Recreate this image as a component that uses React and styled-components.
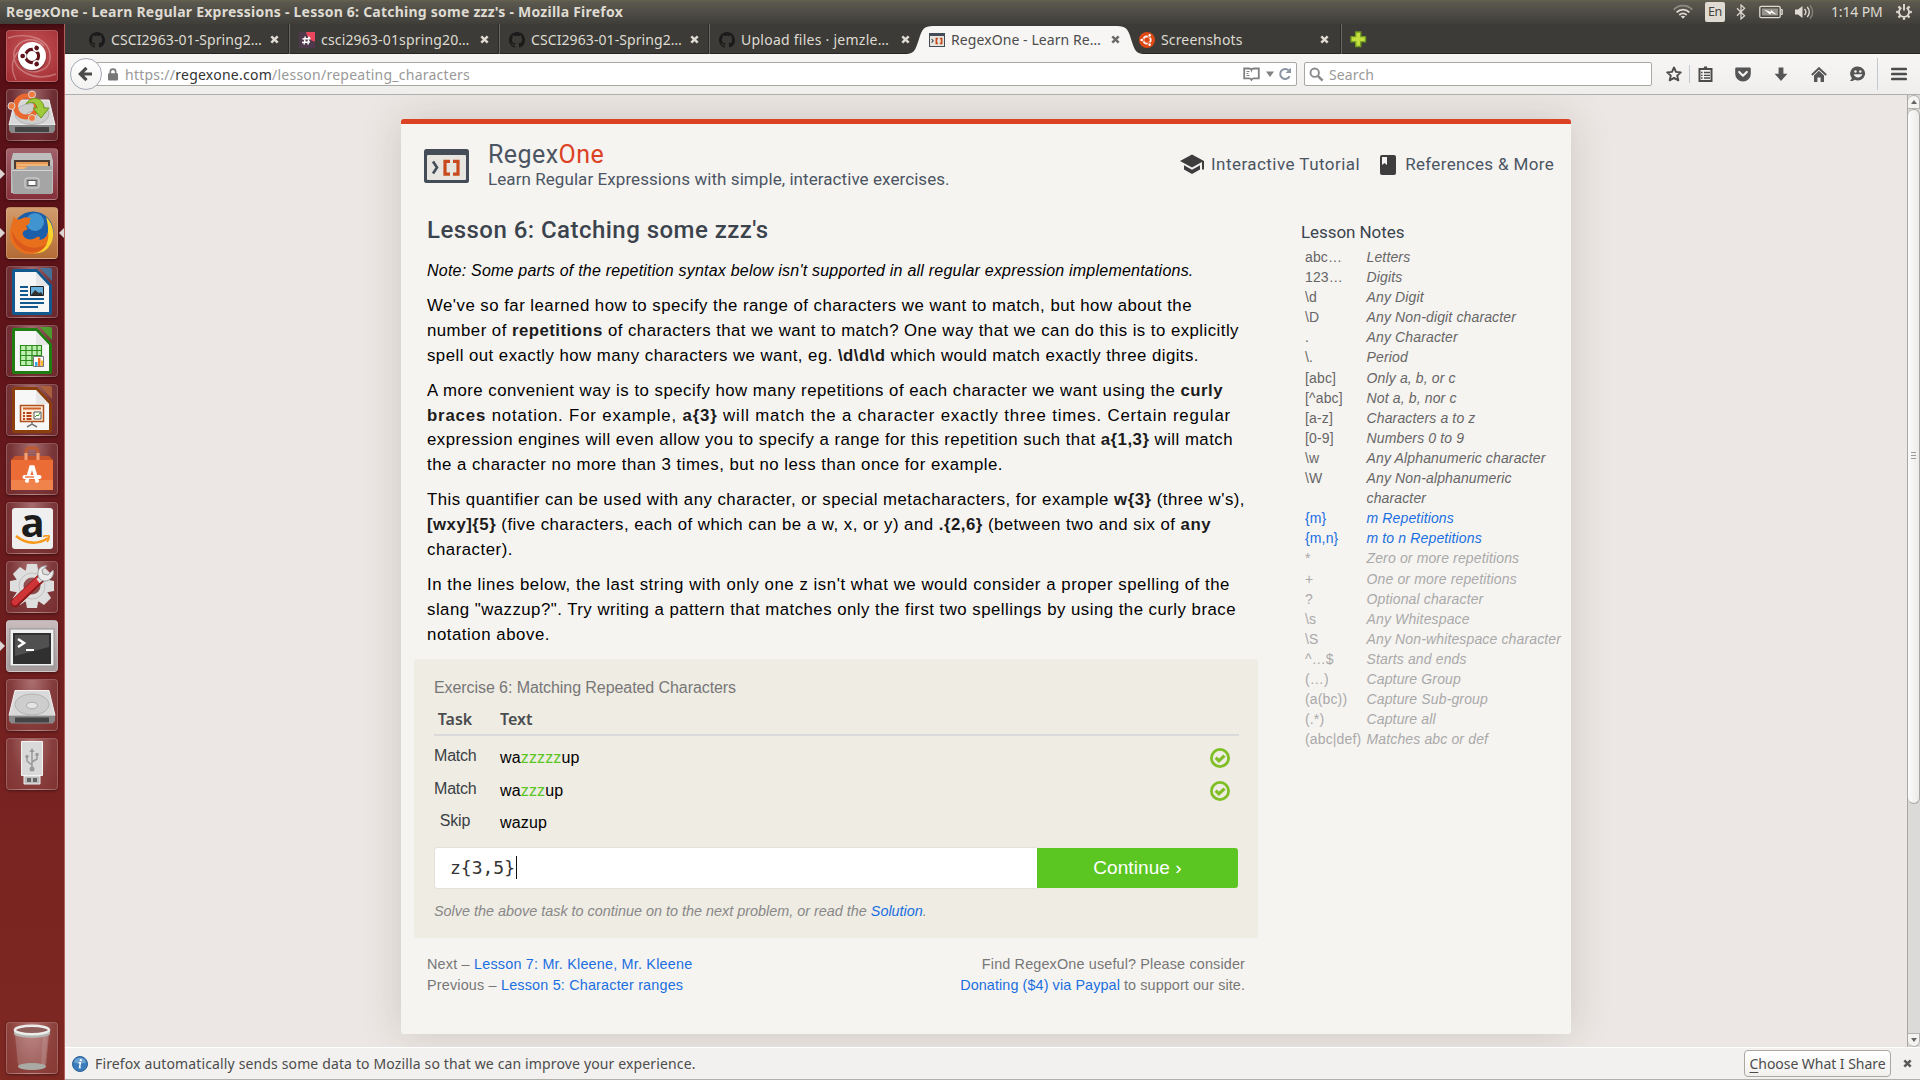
import React, { useLayoutEffect, useRef, useState } from "react";
import styled, { createGlobalStyle, css } from "styled-components";

const UI = '"Noto Sans", "Open Sans", sans-serif';
const HEAD = 'Roboto, "Noto Sans", sans-serif';
const BODY = '"Liberation Sans", Arial, sans-serif';

const GlobalStyle = createGlobalStyle`
  * { box-sizing: border-box; }
  body { margin: 0; background: #ece7e4; overflow: hidden; }
  svg { display: block; flex: none; }
  h1, h2, h3, p { margin: 0; font-weight: inherit; }
`;

/* ---------- shell ---------- */
const Screen = styled.div`
  width: 1920px;
  height: 1080px;
  display: flex;
  flex-direction: column;
  overflow: hidden;
  font-family: ${UI};
  font-size: 14px;
`;
const TopPanel = styled.header`
  height: 24px;
  flex: none;
  display: flex;
  align-items: center;
  justify-content: space-between;
  padding: 0 8px 0 6px;
  color: #dfdbd2;
  background: linear-gradient(#67634f 0, #5b584f 2px, #3f3e39 100%);
`;
const WindowTitle = styled.h1`
  font-size: 14px;
  font-weight: 700;
  line-height: 24px;
  letter-spacing: 0.234px;
  white-space: nowrap;
`;
const Indicators = styled.div`
  display: flex;
  align-items: center;
  height: 24px;
`;
const Gap = styled.span`
  flex: none;
  width: ${(p) => p.$w}px;
`;
const LangBadge = styled.span`
  width: 20px;
  height: 20px;
  border-radius: 2px;
  background: #dfdbd2;
  color: #44423d;
  font-size: 12.5px;
  line-height: 20px;
  text-align: center;
  letter-spacing: -0.3px;
`;
const Clock = styled.span`
  width: 52px;
  white-space: nowrap;
  line-height: 24px;
  letter-spacing: -0.14px;
`;
const Workspace = styled.div`
  flex: 1;
  min-height: 0;
  display: flex;
`;

/* ---------- launcher ---------- */
const Launcher = styled.nav`
  width: 65px;
  flex: none;
  display: flex;
  flex-direction: column;
  gap: 7px;
  padding: 6px 0 6px 6px;
  border-right: 1px solid #b0605c;
  background: linear-gradient(#3f0a10 0, #581016 7px, #5d1319 25%, #7b2522 80%, #7e2822 100%);
`;
const Tile = styled.div`
  position: relative;
  width: 52px;
  height: 52px;
  flex: none;
  border-radius: 4px;
  border: 1px solid rgba(255, 255, 255, 0.2);
  background: ${(p) => p.$bg || "radial-gradient(ellipse at 50% 0, rgba(255,225,225,.42) 0, rgba(255,255,255,.13) 60%, rgba(255,255,255,.08) 100%)"};
  box-shadow: 0 1px 3px rgba(0, 0, 0, 0.4);
  margin-top: ${(p) => (p.$last ? "auto" : 0)};
  & > svg { margin: -1px; }
`;
const Pip = styled.i`
  position: absolute;
  top: 20px;
  border: 5px solid transparent;
  ${(p) => p.$side === "left"
    ? css`left: -7px; border-left-color: #ddd5d3; border-right-width: 0;`
    : css`right: -7px; border-right-color: #ddd5d3; border-left-width: 0;`}
`;

/* ---------- browser chrome ---------- */
const Browser = styled.div`
  flex: 1;
  min-width: 0;
  display: flex;
  flex-direction: column;
`;
const TabBar = styled.div`
  height: 30px;
  flex: none;
  display: flex;
  padding-left: 15px;
  background: #3c3b37;
  border-bottom: 1px solid #282724;
`;
const Tab = styled.div`
  position: relative;
  width: ${(p) => p.$w || 210}px;
  height: 30px;
  flex: none;
  display: flex;
  align-items: center;
  padding: 1px ${(p) => p.$pr ?? 10}px 0 ${(p) => p.$pl ?? 9}px;
  color: ${(p) => (p.$active ? "#4c4c4c" : "#dfdbd2")};
  border-right: ${(p) => (p.$line ? "1px solid #6a6862" : "0")};
  box-shadow: ${(p) => (p.$line ? "inset -1px 0 #2b2a27" : "none")};
  & > svg { position: relative; }
`;
const TabShape = styled.svg`
  && { position: absolute; left: -13px; top: 2px; }
`;
const TabLabel = styled.span`
  position: relative;
  flex: 1;
  margin-left: 6px;
  line-height: 28px;
  white-space: nowrap;
  letter-spacing: ${(p) => p.$ls}px;
`;
const NavBar = styled.div`
  height: 41px;
  flex: none;
  display: flex;
  align-items: center;
  padding: 0 13px 0 5px;
  background: linear-gradient(#f7f6f5, #efeeec);
  border-bottom: 1px solid #b1afab;
`;
const BackButton = styled.div`
  position: relative;
  z-index: 1;
  width: 32px;
  height: 32px;
  flex: none;
  display: grid;
  place-items: center;
  border: 1px solid #a3a9b5;
  border-radius: 50%;
  background: linear-gradient(#fff, #f3f2f1);
`;
const UrlBox = styled.div`
  height: 24px;
  width: 1204px;
  margin-left: -9px;
  display: flex;
  align-items: center;
  padding: 0 4px 0 14px;
  color: #999;
  background: #fff;
  border: 1px solid #aaa8a3;
  border-radius: 0 2px 2px 0;
`;
const Url = styled.span`
  flex: 1;
  margin-left: ${(p) => p.$ml}px;
  padding-top: 1px;
  letter-spacing: ${(p) => p.$ls}px;
  line-height: 22px;
  b { font-weight: 400; color: #333; }
`;
const SearchBox = styled(UrlBox)`
  width: 348px;
  margin-left: 7px;
  padding: 0 4px;
  border-radius: 2px;
`;
const Tools = styled.div`
  display: flex;
  align-items: center;
  margin-left: auto;
`;
const Rule = styled.i`
  width: 1px;
  height: ${(p) => p.$h}px;
  background: #c3c9d0;
`;

/* ---------- page ---------- */
const Viewport = styled.div`
  flex: 1;
  min-height: 0;
  display: flex;
  background: #ece7e4;
`;
const PageArea = styled.main`
  flex: 1;
  padding: 24px 0 0 336px;
  overflow: hidden;
  font-family: ${BODY};
`;
const ScrollBar = styled.div`
  width: 13px;
  flex: none;
  display: flex;
  flex-direction: column;
  background: #dbdad8;
  border-left: 1px solid #aaa8a4;
`;
const ScrollArrow = styled.div`
  height: 14px;
  display: grid;
  place-items: center;
  background: #f4f3f2;
  border: 1px solid #b5b3af;
  border-left: 0;
  border-radius: ${(p) => (p.$down ? "0 0 7px 7px" : "7px 7px 0 0")};
  margin-top: ${(p) => (p.$down ? "auto" : "0")};
`;
const Thumb = styled.div`
  height: 695px;
  display: grid;
  place-content: center;
  gap: 2px;
  padding-bottom: 3px;
  background: linear-gradient(90deg, #fbfbfb, #ecebea);
  border: 1px solid #a9a7a3;
  border-left: 0;
  border-radius: 6px;
  i { width: 5px; height: 1px; background: #999; }
`;
const Card = styled.article`
  width: 1170px;
  height: 915px;
  border-top: 5px solid #db4324;
  border-radius: 3px;
  background: #f6f4f1;
  box-shadow: 0 0 40px rgba(60, 45, 35, 0.17);
`;
const CardHeader = styled.header`
  height: 91px;
  display: flex;
  padding: 15px 17px 0 23px;
`;
const LogoMark = styled.svg`
  margin-top: 10px;
`;
const Brand = styled.div`
  margin-left: 19px;
  flex: 1;
  font-family: ${HEAD};
  color: #4b5563;
`;
const BrandName = styled.h2`
  font-size: 25px;
  line-height: 32px;
  letter-spacing: 0.45px;
  em { font-style: normal; color: #db4324; }
`;
const Tagline = styled.p`
  font-size: 17px;
  line-height: 16px;
  letter-spacing: 0.07px;
`;
const HeaderLink = styled.a`
  display: flex;
  align-items: flex-start;
  margin: 13px 0 0 ${(p) => p.$ml || 0}px;
  font: 17px/24px ${HEAD};
  letter-spacing: ${(p) => p.$ls}px;
  color: #4b5563;
  white-space: nowrap;
  svg { margin: ${(p) => p.$drop}px ${(p) => p.$gap}px 0 0; }
`;
const Columns = styled.div`
  display: flex;
  padding-left: 13px;
`;
const Main = styled.section`
  width: 844px;
`;
const LessonTitle = styled.h2`
  padding-left: 13px;
  margin-bottom: 13px;
  font: 500 24px/30px ${HEAD};
  letter-spacing: 0.46px;
  color: #3b434d;
`;
const Note = styled.p`
  padding-left: 13px;
  margin-bottom: 11px;
  font-size: 16px;
  line-height: 25px;
  font-style: italic;
  letter-spacing: 0.222px;
  white-space: nowrap;
`;
const Para = styled.p`
  padding-left: 13px;
  margin-bottom: 10.4px;
  font-size: 16.8px;
  line-height: 24.8px;
  b { color: #1c1c1c; }
`;
const LineBox = styled.span`
  display: block;
  width: max-content;
  white-space: nowrap;
`;
const Panel = styled.section`
  height: 279px;
  margin-top: 11.4px;
  padding: 17px 19px 0 20px;
  border-radius: 3px;
  background: #efece4;
`;
const PanelTitle = styled.h3`
  font-size: 16px;
  line-height: 24px;
  letter-spacing: -0.076px;
  color: #777;
`;
const taskGrid = css`
  display: grid;
  grid-template-columns: 42px 1fr 20px;
  column-gap: 24px;
  padding-right: 9px;
`;
const TaskHead = styled.div`
  ${taskGrid}
  height: 36px;
  padding-top: 7px;
  border-bottom: 2px solid #dadada;
  font: 600 16px/24px ${UI};
  color: #4a4c4f;
  margin-bottom: 3px;
  span:first-child { text-align: center; }
`;
const TaskRow = styled.div`
  ${taskGrid}
  height: 32.7px;
  font-size: 16px;
  line-height: 33px;
  svg { margin-top: 9px; }
`;
const TaskKind = styled.span`
  text-align: center;
  letter-spacing: -0.2px;
  color: #3a3f44;
`;
const TaskText = styled.span`
  padding-top: 2px;
  letter-spacing: 0.15px;
  color: #000;
  em { font-style: normal; color: #5bc622; }
`;
const AnswerForm = styled.div`
  display: flex;
  height: 42px;
  margin: 10px 1px 12px 0;
`;
const Answer = styled.div`
  flex: 1;
  display: flex;
  align-items: center;
  padding: 0 0 1px 15px;
  background: #fff;
  border: 1px solid #e3e1d8;
  border-right: 0;
  border-radius: 3px 0 0 3px;
  color: #333;
  font: 18px "DejaVu Sans Mono", monospace;
`;
const Caret = styled.i`
  width: 1px;
  height: 23px;
  margin-left: 1px;
  background: #111;
`;
const ContinueButton = styled.div`
  width: 201px;
  height: 40px;
  margin-top: 1px;
  border-radius: 0 3px 3px 0;
  background: #5bc622;
  color: #fff;
  font-size: 19px;
  line-height: 39px;
  letter-spacing: 0.08px;
  text-align: center;
`;
const Hint = styled.p`
  font-size: 14.4px;
  line-height: 20px;
  font-style: italic;
  color: #888;
`;
const Link = styled.a`
  color: #1a6fe0;
`;
const Footer = styled.footer`
  display: flex;
  justify-content: space-between;
  padding: 16px 13px 0;
  font-size: 14.4px;
  line-height: 21px;
  color: #777;
`;
const FooterCol = styled.div`
  text-align: ${(p) => p.$align || "left"};
`;
const FooterLine = styled.div`
  letter-spacing: ${(p) => p.$ls}px;
`;
const Notes = styled.aside`
  margin-left: 43px;
  padding-top: 6px;
  color: #666;
`;
const NotesTitle = styled.h3`
  margin-bottom: 4px;
  font: 17px/22px ${HEAD};
  letter-spacing: -0.07px;
  color: #3b434d;
`;
const NoteRow = styled.div`
  display: grid;
  grid-template-columns: 61.5px auto;
  padding-left: 4px;
  font-size: 14px;
  line-height: 20.1px;
  letter-spacing: 0.14px;
  color: ${(p) => ({ on: "#1a6fe0", off: "#a9a9a9" }[p.$state] || "#666")};
  i { white-space: pre; }
`;
const InfoBar = styled.footer`
  height: 33px;
  flex: none;
  display: flex;
  align-items: center;
  padding: 0 8px 0 7px;
  color: #4c4c4c;
  background: #f2f1ef;
  border-top: 1px solid #fff;
  border-bottom: 1px solid #b1afab;
`;
const InfoText = styled.span`
  flex: 1;
  margin-left: 7px;
  letter-spacing: 0.14px;
`;
const ShareButton = styled.div`
  width: 147px;
  height: 27px;
  margin-right: 12px;
  border: 1px solid #aba8a3;
  border-radius: 4px;
  background: linear-gradient(#fff, #f1f0ee);
  line-height: 26px;
  text-align: center;
  letter-spacing: -0.046px;
  u { text-underline-offset: 3px; }
`;

/* ---------- icons ---------- */
const Close = ({ c = "#dfdbd2", ...p }) => (
  <svg width="9" height="9" viewBox="0 0 9 9" {...p}>
    <path d="M1.3 1.3 7.7 7.7M7.7 1.3 1.3 7.7" stroke={c} strokeWidth="2.5" />
  </svg>
);
const GitHub = () => (
  <svg width="16" height="16" viewBox="0 0 16 16">
    <path fill="#1b1b1b" d="M8 0C3.58 0 0 3.58 0 8c0 3.54 2.29 6.53 5.47 7.59.4.07.55-.17.55-.38 0-.19-.01-.82-.01-1.49-2.01.37-2.53-.49-2.69-.94-.09-.23-.48-.94-.82-1.13-.28-.15-.68-.52-.01-.53.63-.01 1.08.58 1.23.82.72 1.21 1.87.87 2.33.66.07-.52.28-.87.51-1.07-1.78-.2-3.64-.89-3.64-3.95 0-.87.31-1.59.82-2.15-.08-.2-.36-1.02.08-2.12 0 0 .67-.21 2.2.82.64-.18 1.32-.27 2-.27s1.36.09 2 .27c1.53-1.04 2.2-.82 2.2-.82.44 1.1.16 1.92.08 2.12.51.56.82 1.27.82 2.15 0 3.07-1.87 3.75-3.65 3.95.29.25.54.73.54 1.48 0 1.07-.01 1.93-.01 2.2 0 .21.15.46.55.38A8.01 8.01 0 0 0 16 8c0-4.42-3.58-8-8-8z" />
  </svg>
);
const Slack = () => (
  <svg width="16" height="16" viewBox="0 0 16 16">
    <path fill="#4d394b" d="M0 0h16v16H0z" />
    <path fill="#e9455c" d="M7 0h9v9.5C11 9 8 5 7 0z" />
    <path d="m6.2 4.5-1 8M10 4.5l-1 8M3.5 7l8-.6M3 10.5l8-.6" stroke="#fff" strokeWidth="1.5" />
  </svg>
);
const RegexMark = () => (
  <svg width="16" height="14" viewBox="0 0 16 14">
    <path fill="#434c57" d="M0 0h16v14H0z" />
    <path fill="#e6e5df" d="M1 3h14v10H1z" />
    <path d="m2.6 6 1.6 1.8-1.6 1.8" fill="none" stroke="#434c57" strokeWidth="1.1" />
    <path d="M9 5.5H7.4v5H9M10.8 5.5h1.8v5h-1.8" fill="none" stroke="#c8491d" strokeWidth="1.7" />
  </svg>
);
const Friends = ({ ring, hole }) => (
  <g>
    <circle r="5.6" fill="none" stroke={ring} strokeWidth="2.6" />
    {[180, 300, 60].map((a) => (
      <g key={a} transform={`rotate(${a})`}>
        <circle cx="7.6" r="3.1" fill={hole} />
        <circle cx="7.9" r="2" fill={ring} />
      </g>
    ))}
  </g>
);
const UbuntuFav = () => (
  <svg width="16" height="16" viewBox="-12 -12 24 24">
    <circle r="12" fill="#dd4814" />
    <Friends ring="#fff" hole="#dd4814" />
  </svg>
);
const Wifi = () => (
  <svg width="20" height="16" viewBox="0 0 20 16" fill="none" strokeWidth="1.8">
    <path d="M.8 5.6c5-5.4 13.4-5.4 18.4 0" stroke="#8f8c85" />
    <path d="M3.6 8.4c3.6-3.7 9.2-3.7 12.8 0M6.3 11c2.2-2 5.2-2 7.4 0" stroke="#dfdbd2" />
    <path d="m7.8 12.6 2.2 2.2 2.2-2.2c-1.3-1-3.1-1-4.4 0z" fill="#dfdbd2" />
  </svg>
);
const Bluetooth = () => (
  <svg width="10" height="16" viewBox="0 0 10 16">
    <path d="m1 4.3 7.6 7.4L5 15V1l3.6 3.3L1 11.7" fill="none" stroke="#dfdbd2" strokeWidth="1.2" />
  </svg>
);
const Battery = () => (
  <svg width="24" height="14" viewBox="0 0 24 14">
    <rect x=".8" y="1.3" width="20.4" height="11.4" rx="1.5" fill="none" stroke="#dfdbd2" strokeWidth="1.3" />
    <path d="M22 4.5h1.3v5H22z" fill="none" stroke="#dfdbd2" />
    <path d="M3 3.5h16v7H3z" fill="#96938c" />
    <path d="m5 4.3 6.5 2.6.6-2L18 10l-6-2.2-.8 2z" fill="#fff" />
  </svg>
);
const Sound = () => (
  <svg width="20" height="16" viewBox="0 0 20 16">
    <path d="M1 5.5h3L8.5 2v12L4 10.5H1z" fill="#dfdbd2" />
    <path d="M10.5 5c1.6 1.7 1.6 4.3 0 6M13.2 3c2.8 2.9 2.8 7.1 0 10" fill="none" stroke="#dfdbd2" strokeWidth="1.4" />
    <path d="M15.8 1.2c3.8 4 3.8 9.6 0 13.6" fill="none" stroke="#85827b" strokeWidth="1.4" />
  </svg>
);
const Gear = () => (
  <svg width="16" height="17" viewBox="-8 -8 16 17">
    <g stroke="#dfdbd2" fill="none">
      <path d="M-2.6-4.3a5 5 0 1 0 5.2 0" strokeWidth="1.8" />
      <path d="M0-8v6.5" strokeWidth="1.9" />
      {[45, 90, 135, 180, 225, 270, 315].map((a) => (
        <path key={a} d="M0-5.4v-2.4" strokeWidth="2.3" transform={`rotate(${a})`} />
      ))}
    </g>
  </svg>
);
const Arrow = () => (
  <svg width="16" height="16" viewBox="0 0 16 16">
    <path d="M8.5 1.8 2.3 8l6.2 6.2M3 8h11" fill="none" stroke="#4a4a4a" strokeWidth="3.2" />
  </svg>
);
const Lock = () => (
  <svg width="10" height="13" viewBox="0 0 10 13">
    <path d="M2.3 6V3.8a2.7 2.7 0 0 1 5.4 0V6" fill="none" stroke="#777" strokeWidth="1.6" />
    <rect y="5.2" width="10" height="7.4" rx="1" fill="#777" />
  </svg>
);
const Reader = () => (
  <svg width="17" height="14" viewBox="0 0 17 14" fill="none" stroke="#808080">
    <path d="M1.2 1.5H6c1.2 0 2.3.5 2.5 1.3.3-.8 1.4-1.3 2.5-1.3h4.8v9.8H11c-1.2 0-2 .3-2.5 1.4-.4-1.1-1.3-1.4-2.5-1.4H1.2z" strokeWidth="1.8" />
    <path d="M3.5 4.5h3M3.5 6.5h2M3.5 8.5h3" />
  </svg>
);
const Down = ({ c = "#808080" }) => (
  <svg width="8" height="6" viewBox="0 0 8 6"><path d="M0 .5h8L4 6z" fill={c} /></svg>
);
const Reload = () => (
  <svg width="14" height="14" viewBox="0 0 14 14">
    <path d="M11.6 9.3A5 5 0 1 1 10.6 3.3" fill="none" stroke="#8a94a3" strokeWidth="2" />
    <path d="M13 .8V6H7.6z" fill="#8a94a3" />
  </svg>
);
const Magnifier = () => (
  <svg width="15" height="15" viewBox="0 0 15 15" fill="none" stroke="#8a8a8a">
    <circle cx="5.7" cy="5.7" r="4.2" strokeWidth="1.9" />
    <path d="m8.8 8.8 4.8 4.8" strokeWidth="2.6" />
  </svg>
);
const Star = () => (
  <svg width="16" height="16" viewBox="0 0 16 16">
    <path d="m8 1.5 2 4.4 4.8.5-3.6 3.2 1.1 4.7L8 11.9l-4.3 2.4 1.1-4.7L1.2 6.4 6 5.9z" fill="none" stroke="#4c4c4c" strokeWidth="1.9" strokeLinejoin="round" />
  </svg>
);
const Clipboard = () => (
  <svg width="15" height="16" viewBox="0 0 15 16">
    <path d="M1.5 3h12v12h-12z" fill="none" stroke="#4c4c4c" strokeWidth="2" />
    <path d="M4 3.8h7V2.4H9.3L9 .5H6l-.3 1.9H4z" fill="#4c4c4c" />
    <path d="M3 6.5h1.6M6 6.5h6M3 9.3h1.6M6 9.3h6M3 12h1.6M6 12h6" stroke="#4c4c4c" strokeWidth="1.3" />
  </svg>
);
const Pocket = () => (
  <svg width="16" height="15" viewBox="0 0 16 15">
    <path d="M1.5.5h13c.8 0 1.3.6 1.3 1.3v4.9a7.8 7.8 0 0 1-15.6 0V1.8C.2 1 .8.5 1.5.5z" fill="#555" />
    <path d="M4.2 5 8 8.7 11.8 5" fill="none" stroke="#f5f4f3" strokeWidth="2.2" strokeLinecap="round" strokeLinejoin="round" />
  </svg>
);
const Download = () => (
  <svg width="14" height="15" viewBox="0 0 14 15"><path d="M4.6.5h4.8v6.2h4L7 14 .6 6.7h4z" fill="#555" /></svg>
);
const Home = () => (
  <svg width="16" height="15" viewBox="0 0 16 15">
    <path d="M.8 8 8 1.2 15.2 8" fill="none" stroke="#555" strokeWidth="1.9" />
    <path d="M3 8.4 8 3.7l5 4.7V15H9.6v-4.5H6.4V15H3z" fill="#555" />
  </svg>
);
const Chat = () => (
  <svg width="17" height="16" viewBox="0 0 17 16">
    <path d="M9 .6a7.3 6.9 0 1 1-3.2 13.2C4.5 14.9 2.8 15.3.8 15c1.3-.9 1.9-2 1.9-3.3A7.3 6.9 0 0 1 9 .6z" fill="#555" />
    <circle cx="6.5" cy="5.5" r="1.2" fill="#f3f2f1" /><circle cx="11.3" cy="5.5" r="1.2" fill="#f3f2f1" />
    <path d="M4.8 8.3h8.4c-.8 4.2-7.6 4.2-8.4 0z" fill="#f3f2f1" />
  </svg>
);
const Menu = () => (
  <svg width="16" height="14" viewBox="0 0 16 14"><path d="M1.3 2h13.4M1.3 7h13.4M1.3 12h13.4" stroke="#4c4c4c" strokeWidth="2.7" strokeLinecap="round" /></svg>
);
const Plus = () => (
  <svg width="17" height="17" viewBox="0 0 17 17">
    <path d="M5.7 1h5.1v4.7h4.7v5.1h-4.7v4.7H5.7v-4.7H1V5.7h4.7z" fill="#c3df3d" stroke="#6f9a1f" strokeWidth="1.3" />
  </svg>
);
const Cap = () => (
  <svg width="24" height="23" viewBox="0 0 24 23">
    <path fill="#3d3d3d" d="M4 12.2v4.2L12 21l8-4.6v-4.2l-8 4.6zM12 1.5 0 8l12 6.6L22 9.1v7.4h2V8z" />
  </svg>
);
const Book = () => (
  <svg width="16" height="20" viewBox="0 0 16 20">
    <rect width="16" height="20" rx="2" fill="#3d3d3d" />
    <path d="M2 2h5v8L4.5 8 2 10z" fill="#f6f4f1" />
  </svg>
);
const Check = () => (
  <svg width="20" height="20" viewBox="0 0 20 20" fill="none" stroke="#7fbf25">
    <circle cx="10" cy="10" r="8.6" strokeWidth="2.8" />
    <path d="m5.7 9.7 3.2 3.2 5.6-5.2" strokeWidth="3.2" />
  </svg>
);
const Info = () => (
  <svg width="16" height="16" viewBox="0 0 16 16">
    <circle cx="8" cy="8" r="7.5" fill="#3c7cbb" stroke="#2b6197" />
    <path d="M2 6.5a6.2 6.2 0 0 1 12 0C10 8 6 8 2 6.5z" fill="#6fa3d4" />
    <path d="M6.6 6.8h1.8l-.9 4.7h1.3" fill="none" stroke="#fff" strokeWidth="1.4" /><circle cx="8.8" cy="4.2" r="1.1" fill="#fff" />
  </svg>
);

const Art = ({ children }) => <svg width="52" height="52" viewBox="0 0 52 52">{children}</svg>;
const Dash = () => (
  <Art>
    <g fill="none" stroke="#fff" strokeWidth="1.4" opacity=".3">
      <path d="M2 8C22 2 46 8 44 30M50 44C30 52 6 42 8 22M44 30c-2 12-20 16-28 6M8 22C12 8 30 6 38 16M10 50C4 38 6 30 12 22" />
    </g>
    <circle cx="26" cy="27" r="14.5" fill="#3d0a10" opacity=".35" />
    <circle cx="26" cy="26" r="14" fill="#fff" />
    <g transform="translate(26 26) scale(1.18)"><Friends ring="#5d1319" hole="#fff" /></g>
  </Art>
);
const DiskBase = ({ y = 0 }) => (
  <g transform={`translate(0 ${y})`}>
    <path d="M9 11h34l6 25H3z" fill="#d9d9d9" stroke="#f3f3f3" />
    <path d="M3 36h46v5l-2 3H5l-2-3z" fill="#888" /><path d="M9 38h34v5H9z" fill="#444" />
    <ellipse cx="26" cy="25" rx="17" ry="10.5" fill="#cdcdcd" stroke="#b3b3b3" />
    <ellipse cx="26" cy="26" rx="5.5" ry="3.3" fill="#e4e4e4" stroke="#aaa" />
  </g>
);
const Installer = () => (
  <Art>
    <DiskBase />
    <circle cx="20" cy="17.5" r="10.5" fill="none" stroke="#e8682f" strokeWidth="5" />
    <g fill="#f07a3d" stroke="#d9d9d9"><circle cx="5.5" cy="17" r="3.5" /><circle cx="26" cy="5.5" r="3.5" /><circle cx="26" cy="29" r="3.5" /></g>
    <path d="M20 15c4-8 17-8 18 4h5l-8 10-8-10h4c-1-6-6-7-11-4z" fill="#9fcb3a" stroke="#6a971c" />
  </Art>
);
const Files = () => (
  <Art>
    <path d="M7 5h38l2 8v32H5V13z" fill="#bdbdbd" /><path d="M8 12h36v12H8z" fill="#4c3a34" />
    <path d="M10 14h32v9H10z" fill="#e79a55" /><path d="M11 17h31M11 20h31" stroke="#f8cf9e" />
    <path d="M6 21h12l4-3h24v28H7z" fill="#a5a5a5" /><path d="M6 22h40v1H6z" fill="#d5d5d5" />
    <rect x="19" y="30" width="14" height="10" rx="2" fill="#a0a0a0" stroke="#dadada" /><rect x="22" y="32.5" width="8" height="5" fill="#fff" stroke="#555" />
  </Art>
);
const Firefox = () => (
  <Art>
    <circle cx="27" cy="25" r="20.5" fill="#1c5ea9" /><circle cx="29" cy="15" r="9" fill="#4aa3da" opacity=".8" />
    <path d="M40 10c9 8 10 23 1 32-7 6-15 5-20 3 10 0 19-5 20-15 2-6 1-13-1-20z" fill="#fbd22c" />
    <path d="M8 9c1 3 3 4 7 3 3-2 6-2 10-1-1 2-2 3-1 5l-4 3c1 2 2 3 1 4-3 0-5 2-4 5 2 5 9 6 14 2 3-1 4 1 2 3 4 0 8-3 9-8 2 11-5 21-16 22C14 48 4 39 4 28 4 21 6 17 8 9z" fill="#e8701d" />
    <path d="M6 24c0 12 9 21 20 21 7 0 12-3 15-8-8 5-19 5-26-1-4-3-7-8-9-12z" fill="#d2491c" opacity=".6" />
  </Art>
);
const Doc = ({ c, c2, children }) => (
  <Art>
    <path d="M8 3h23l15 16v28q0 2-2 2H8q-2 0-2-2V5q0-2 2-2z" fill={c} />
    <path d="M34 2h10q2 0 2 2v11z" fill={c2} opacity=".8" /><path d="M9 6h21l13 14v26H9z" fill="#f7f7f7" /><path d="M30 6l13 14H30z" fill="#dcdcdc" opacity=".6" />
    {children}
  </Art>
);
const Writer = () => (
  <Doc c="#11598f" c2="#3a7fae">
    <path d="M14 21h8M14 25h8M14 29h8M14 33h24M14 37h24M14 41h18" stroke="#11598f" strokeWidth="2" />
    <path d="M24.5 20.5h13v9h-13z" fill="#6ab0dc" stroke="#222" /><path d="M25 29l4-5 4 3 2-1 2 3z" fill="#333" />
  </Doc>
);
const Calc = () => (
  <Doc c="#1f7d12" c2="#42b32a">
    <path d="M14.5 20.5h21v20h-21zM14 25.5h22M14 30.5h22M14 35.5h22M20 20v21M26 20v21M31 20v21" fill="#bdf0ae" stroke="#2c8a1c" strokeWidth="1.2" />
    <path d="M27.5 31.5h10v10h-10z" fill="#fff" stroke="#777" /><path d="M29 37h2.5v4H29z" fill="#34a3dd" /><path d="M32 33h2.5v8H32z" fill="#f06a22" /><path d="M35 35.5h2v5.5h-2z" fill="#f5bd2b" />
  </Doc>
);
const Impress = () => (
  <Doc c="#8a3f0d" c2="#b5673a">
    <path d="M14.5 21.5h23v16h-23z" fill="#fdebd8" stroke="#b04f1e" strokeWidth="1.5" /><path d="M17 24.5h18" stroke="#d0622b" strokeWidth="2" />
    <path d="M17 29h2M17 32h2M17 35h2M20.5 29h5M20.5 32h5M20.5 35h5" stroke="#b8431a" strokeWidth="2" /><path d="M28 28h7v7h-7z" fill="#fff" stroke="#555" /><path d="m29 33 2-2 1 1 2-3" stroke="#3a9d2a" fill="none" />
    <path d="M26 38v3M21 43l5-3 5 3" fill="none" stroke="#777" strokeWidth="1.5" />
  </Doc>
);
const Software = () => (
  <Art>
    <path d="M20 17V9q0-4 4-4h4q4 0 4 4v8" fill="none" stroke="#c05a33" strokeWidth="3" />
    <path d="M9 13h34l4 4H5z" fill="#c9532a" /><path d="M5 17h42v30H5z" fill="#ec6c35" /><path d="M5 37h42v10H5z" fill="#f0824c" />
    <path d="M20 17V10M32 17V10" stroke="#f5a27a" strokeWidth="3" />
    <path d="M20.5 39.5 25 24h2l4.5 15.5" fill="none" stroke="#fff" strokeWidth="3.6" /><path d="M18.5 34h15" stroke="#fff" strokeWidth="4" strokeLinecap="round" /><path d="M19 34h9" stroke="#ec6c35" strokeWidth="1.4" />
  </Art>
);
const AmazonTile = styled.div`
  width: 41px;
  height: 41px;
  margin: 5px;
  border-radius: 3px;
  background: #efefef;
  display: flex;
  flex-direction: column;
  align-items: center;
  font: 700 40px/27px "Open Sans", ${BODY};
  color: #1c1c1c;
`;
const Amazon = () => (
  <AmazonTile>
    a
    <svg width="38" height="12" viewBox="0 0 38 12">
      <path d="M2 1c10 8 22 9 32 2" fill="none" stroke="#f79a1c" strokeWidth="2.6" /><path d="M29 1.5c3-1 5-1 6-.5.3 2-.5 4-2 6" fill="none" stroke="#f79a1c" strokeWidth="1.8" />
    </svg>
  </AmazonTile>
);
const Settings = () => (
  <Art>
    <g transform="translate(26 25)">
      {[0, 45, 90, 135, 180, 225, 270, 315].map((a) => (
        <path key={a} d="M-5-22H5l1.5 8h-13z" fill="#dedede" transform={`rotate(${a})`} />
      ))}
      <circle r="12.5" fill="none" stroke="#dedede" strokeWidth="8" /><circle r="13" fill="none" stroke="#c2c2c2" />
    </g>
    <path d="M9 42 34 18" stroke="#8e1719" strokeWidth="9" strokeLinecap="round" /><path d="M9 41 33 18" stroke="#cf3437" strokeWidth="6.5" strokeLinecap="round" />
    <path d="M32 20l5-4" stroke="#ddd" strokeWidth="5" />
    <path d="M41 5c-6-1-10 4-9 9 1 6 8 8 12 4 3-2 4-6 3-9l-5 5-5-1-1-4z" fill="#ececec" stroke="#9a9a9a" />
  </Art>
);
const Terminal = () => (
  <Art>
    <rect x="4" y="9" width="44" height="37" fill="#f1f1f1" stroke="#8f8f8f" /><path d="M7 13h38v31H7z" fill="#303030" /><path d="M9 15h34v12L9 36z" fill="#505050" />
    <path d="M12 19l6 4-6 4" fill="none" stroke="#fff" strokeWidth="2.5" /><path d="M20 30h8" stroke="#fff" strokeWidth="2" />
  </Art>
);
const Disk = () => <Art><DiskBase y={0.5} /></Art>;
const Usb = () => (
  <Art>
    <path d="M15.5 3.5h21v34h-21z" fill="#d9d9d9" stroke="#f3f3f3" /><path d="M18 38h16v8H18z" fill="#bcbcbc" stroke="#eee" /><path d="M21 40h4v4h-4zM27 40h4v4h-4z" fill="#666" />
    <path d="M26 12v19M26 27l-5-4v-4M26 24l5-3v-4" fill="none" stroke="#999" strokeWidth="1.5" /><circle cx="26" cy="31" r="2.5" fill="#999" /><path d="M23.5 14 26 10l2.5 4z" fill="#999" /><circle cx="21" cy="18.5" r="1.7" fill="#999" /><path d="M29.5 15h3v3h-3z" fill="#999" />
  </Art>
);
const Trash = () => (
  <Art>
    <path d="M9 12h34l-3 32q-14 6-28 0z" fill="#fff" opacity=".18" /><path d="M37 13h5l-3 31h-4z" fill="#fff" opacity=".12" />
    <ellipse cx="26" cy="44.5" rx="14" ry="3.5" fill="#a9aaa4" />
    <path d="M8 8v4c2 5 34 5 36 0V8z" fill="#b5b5b2" />
    <ellipse cx="26" cy="8" rx="17" ry="4.2" fill="#8f5f5c" stroke="#ececea" strokeWidth="2.6" />
  </Art>
);

/* A text line whose letter-spacing is worked out so that it fills its measure. */
function Line({ w, children }) {
  const ref = useRef(null);
  const [ls, setLs] = useState(0);
  useLayoutEffect(() => {
    const el = ref.current;
    setLs((w - el.getBoundingClientRect().width) / el.textContent.length);
  }, [w]);
  return <LineBox ref={ref} style={{ letterSpacing: ls }}>{children}</LineBox>;
}

const launcherItems = [
  { icon: Dash, bg: "radial-gradient(circle at 50% 40%, #c9595b, #a02b30)" },
  { icon: Installer },
  { icon: Files, left: true, bg: "linear-gradient(#a0606a, #85303a)" },
  { icon: Firefox, left: true, right: true, bg: "linear-gradient(#d29c6c, #b36b35)" },
  { icon: Writer },
  { icon: Calc },
  { icon: Impress },
  { icon: Software },
  { icon: Amazon },
  { icon: Settings },
  { icon: Terminal, left: true, bg: "linear-gradient(#c9bcbc, #a59b9c)" },
  { icon: Disk },
  { icon: Usb },
  { icon: Trash, last: true },
];

const tabs = [
  { label: "CSCI2963-01-Spring2…", icon: GitHub, ls: 0.09, line: true },
  { label: "csci2963-01spring20…", icon: Slack, ls: 0.16, line: true },
  { label: "CSCI2963-01-Spring2…", icon: GitHub, ls: 0.09, line: true },
  { label: "Upload files · jemzle…", icon: GitHub, ls: 0.25 },
  { label: "RegexOne - Learn Re…", icon: RegexMark, ls: 0.08, active: true },
  { label: "Screenshots", icon: UbuntuFav, ls: 0.15, line: true, w: 212, pr: 12 },
];

const notes = [
  ["abc…", "Letters"], ["123…", "Digits"], ["\\d", "Any Digit"], ["\\D", "Any Non-digit character"],
  [".", "Any Character"], ["\\.", "Period"], ["[abc]", "Only a, b, or c"], ["[^abc]", "Not a, b, nor c"],
  ["[a-z]", "Characters a to z"], ["[0-9]", "Numbers 0 to 9"], ["\\w", "Any Alphanumeric character"],
  ["\\W", "Any Non-alphanumeric\ncharacter"], ["{m}", "m Repetitions", "on"], ["{m,n}", "m to n Repetitions", "on"],
  ["*", "Zero or more repetitions", "off"], ["+", "One or more repetitions", "off"], ["?", "Optional character", "off"],
  ["\\s", "Any Whitespace", "off"], ["\\S", "Any Non-whitespace character", "off"], ["^…$", "Starts and ends", "off"],
  ["(…)", "Capture Group", "off"], ["(a(bc))", "Capture Sub-group", "off"], ["(.*)", "Capture all", "off"],
  ["(abc|def)", "Matches abc or def", "off"],
];

export default function App() {
  return (
    <Screen>
      <GlobalStyle />
      <TopPanel>
        <WindowTitle>RegexOne - Learn Regular Expressions - Lesson 6: Catching some zzz's - Mozilla Firefox</WindowTitle>
        <Indicators>
          <Wifi /><Gap $w={12} />
          <LangBadge>En</LangBadge><Gap $w={11} />
          <Bluetooth /><Gap $w={13} />
          <Battery /><Gap $w={11} />
          <Sound /><Gap $w={17} />
          <Clock>1:14 PM</Clock><Gap $w={13} />
          <Gear />
        </Indicators>
      </TopPanel>
      <Workspace>
        <Launcher>
          {launcherItems.map(({ icon: Icon, bg, left, right, last }, i) => (
            <Tile key={i} $bg={bg} $last={last}>
              <Icon />
              {left && <Pip $side="left" />}
              {right && <Pip $side="right" />}
            </Tile>
          ))}
        </Launcher>
        <Browser>
          <TabBar>
            {tabs.map(({ label, icon: Icon, ls, line, active, w, pr }, i) => (
              <Tab key={i} $active={active} $line={line} $w={w} $pr={pr}>
                {active && (
                  <TabShape width="236" height="28" viewBox="0 0 236 28">
                    <path d="M0 28C8 27.5 9 22 12 13 15 3 17 0 26 0H210C219 0 221 3 224 13 227 22 228 27.5 236 28z" fill="#f7f6f5" />
                  </TabShape>
                )}
                <Icon />
                <TabLabel $ls={ls}>{label}</TabLabel>
                <Close c={active ? "#6a6a6a" : "#dfdbd2"} />
              </Tab>
            ))}
            <Tab $w={34} $pl={8} $pr={0}><Plus /></Tab>
          </TabBar>
          <NavBar>
            <BackButton><Arrow /></BackButton>
            <UrlBox>
              <Lock />
              <Url $ml={7} $ls={0.247}>https://<b>regexone.com</b>/lesson/repeating_characters</Url>
              <Reader /><Gap $w={6} /><Down /><Gap $w={4} /><Reload />
            </UrlBox>
            <SearchBox>
              <Magnifier />
              <Url $ml={5} $ls={0.11}>Search</Url>
            </SearchBox>
            <Tools>
              <Star /><Gap $w={7} /><Rule $h={18} /><Gap $w={8} />
              <Clipboard /><Gap $w={22} />
              <Pocket /><Gap $w={23} />
              <Download /><Gap $w={23} />
              <Home /><Gap $w={22} />
              <Chat /><Gap $w={11} /><Rule $h={32} /><Gap $w={13} />
              <Menu />
            </Tools>
          </NavBar>
          <Viewport>
            <PageArea>
              <Card>
                <CardHeader>
                  <LogoMark width="45" height="34" viewBox="0 0 45 34">
                    <rect width="45" height="34" rx="2.5" fill="#434c57" />
                    <rect x="3" y="6" width="39" height="25" rx="1" fill="#e6e5df" />
                    <path d="m9 12.5 4 6-4 6" fill="none" stroke="#434c57" strokeWidth="2.6" />
                    <path d="M26 12.3h-5v12.8h5M29 12.3h5v12.8h-5" fill="none" stroke="#c8491d" strokeWidth="3.2" />
                  </LogoMark>
                  <Brand>
                    <BrandName>Regex<em>One</em></BrandName>
                    <Tagline>Learn Regular Expressions with simple, interactive exercises.</Tagline>
                  </Brand>
                  <HeaderLink $ls={0.46} $gap={7} $drop={1}><Cap />Interactive Tutorial</HeaderLink>
                  <HeaderLink $ls={0.34} $ml={20} $gap={9} $drop={3}><Book />References &amp; More</HeaderLink>
                </CardHeader>
                <Columns>
                  <Main>
                    <LessonTitle>Lesson 6: Catching some zzz's</LessonTitle>
                    <Note>Note: Some parts of the repetition syntax below isn't supported in all regular expression implementations.</Note>
                    <Para>
                      <Line w={765}>We've so far learned how to specify the range of characters we want to match, but how about the</Line>
                      <Line w={812}>number of <b>repetitions</b> of characters that we want to match? One way that we can do this is to explicitly</Line>
                      <Line w={772}>spell out exactly how many characters we want, eg. <b>\d\d\d</b> which would match exactly three digits.</Line>
                    </Para>
                    <Para>
                      <Line w={796}>A more convenient way is to specify how many repetitions of each character we want using the <b>curly</b></Line>
                      <Line w={804}><b>braces</b> notation. For example, <b>a{"{3}"}</b> will match the a character exactly three times. Certain regular</Line>
                      <Line w={806}>expression engines will even allow you to specify a range for this repetition such that <b>a{"{1,3}"}</b> will match</Line>
                      <Line w={576}>the a character no more than 3 times, but no less than once for example.</Line>
                    </Para>
                    <Para>
                      <Line w={818}>This quantifier can be used with any character, or special metacharacters, for example <b>w{"{3}"}</b> (three w's),</Line>
                      <Line w={784}><b>[wxy]{"{5}"}</b> (five characters, each of which can be a w, x, or y) and <b>.{"{2,6}"}</b> (between two and six of <b>any</b></Line>
                      <Line w={86}>character).</Line>
                    </Para>
                    <Para>
                      <Line w={803}>In the lines below, the last string with only one z isn't what we would consider a proper spelling of the</Line>
                      <Line w={809}>slang "wazzup?". Try writing a pattern that matches only the first two spellings by using the curly brace</Line>
                      <Line w={123}>notation above.</Line>
                    </Para>
                    <Panel>
                      <PanelTitle>Exercise 6: Matching Repeated Characters</PanelTitle>
                      <TaskHead><span>Task</span><span>Text</span></TaskHead>
                      <TaskRow><TaskKind>Match</TaskKind><TaskText>wa<em>zzzzz</em>up</TaskText><Check /></TaskRow>
                      <TaskRow><TaskKind>Match</TaskKind><TaskText>wa<em>zzz</em>up</TaskText><Check /></TaskRow>
                      <TaskRow><TaskKind>Skip</TaskKind><TaskText>wazup</TaskText></TaskRow>
                      <AnswerForm>
                        <Answer>{"z{3,5}"}<Caret /></Answer>
                        <ContinueButton>Continue ›</ContinueButton>
                      </AnswerForm>
                      <Hint>Solve the above task to continue on to the next problem, or read the <Link>Solution</Link>.</Hint>
                    </Panel>
                    <Footer>
                      <FooterCol>
                        <FooterLine $ls={0.2}>Next – <Link>Lesson 7: Mr. Kleene, Mr. Kleene</Link></FooterLine>
                        <FooterLine $ls={0.18}>Previous – <Link>Lesson 5: Character ranges</Link></FooterLine>
                      </FooterCol>
                      <FooterCol $align="right">
                        <FooterLine $ls={0.15}>Find RegexOne useful? Please consider</FooterLine>
                        <FooterLine $ls={0.09}><Link>Donating ($4) via Paypal</Link> to support our site.</FooterLine>
                      </FooterCol>
                    </Footer>
                  </Main>
                  <Notes>
                    <NotesTitle>Lesson Notes</NotesTitle>
                    {notes.map(([k, v, state]) => (
                      <NoteRow key={k} $state={state}><span>{k}</span><i>{v}</i></NoteRow>
                    ))}
                  </Notes>
                </Columns>
              </Card>
            </PageArea>
            <ScrollBar>
              <ScrollArrow><svg width="6" height="4" viewBox="0 0 6 4"><path d="M0 4h6L3 0z" fill="#666" /></svg></ScrollArrow>
              <Thumb><i /><i /><i /></Thumb>
              <ScrollArrow $down><svg width="6" height="4" viewBox="0 0 6 4"><path d="M0 0h6L3 4z" fill="#666" /></svg></ScrollArrow>
            </ScrollBar>
          </Viewport>
          <InfoBar>
            <Info />
            <InfoText>Firefox automatically sends some data to Mozilla so that we can improve your experience.</InfoText>
            <ShareButton><u>C</u>hoose What I Share</ShareButton>
            <Close c="#5a5a5a" />
          </InfoBar>
        </Browser>
      </Workspace>
    </Screen>
  );
}
